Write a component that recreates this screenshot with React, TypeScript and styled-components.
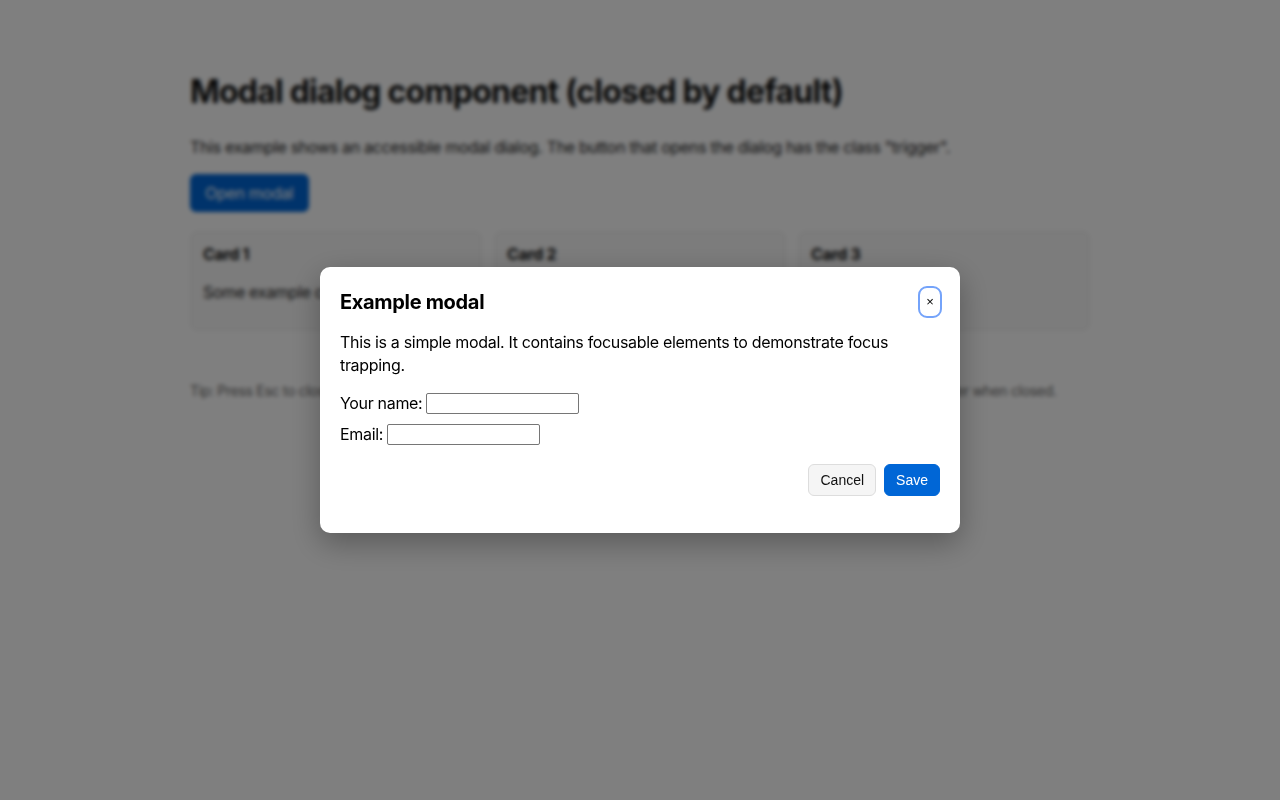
import React, { useState } from 'react';
import styled, { createGlobalStyle } from 'styled-components';

const GlobalStyle = createGlobalStyle`
  html, body {
    margin: 0;
    padding: 0;
    background: #ffffff;
    font-family: Inter, Roboto, "Liberation Sans", sans-serif;
    letter-spacing: -0.02em;
    color: #111111;
  }
  * {
    box-sizing: border-box;
  }
`;

const Page = styled.main`
  max-width: 900px;
  margin: 0 auto;
  padding: 73px 0 48px;
`;

const Title = styled.h1`
  margin: 0 0 24px;
  font-size: 32px;
  line-height: 38px;
  font-weight: 700;
  letter-spacing: -0.025em;
  color: #111111;
`;

const Lead = styled.p`
  margin: 0 0 15px;
  font-size: 16px;
  line-height: 24px;
  color: #222222;
`;

const PrimaryButton = styled.button`
  font-family: Inter, Roboto, sans-serif;
  font-size: 16px;
  line-height: 20px;
  letter-spacing: -0.02em;
  padding: 8px 15px 8px 14px;
  border: 1px solid #0066d6;
  border-radius: 6px;
  background: #0066d6;
  color: #ffffff;
  cursor: pointer;
`;

const CardGrid = styled.section`
  display: grid;
  grid-template-columns: repeat(3, 1fr);
  gap: 12px;
  margin-top: 19px;
`;

const Card = styled.article`
  background: #f8f8f8;
  border: 1px solid #ececec;
  border-radius: 8px;
  padding: 12px 12px 14px;
  min-height: 100px;
`;

const CardTitle = styled.h3`
  margin: 0;
  font-size: 16px;
  line-height: 20px;
  font-weight: 700;
`;

const CardText = styled.p`
  margin: 16px 0 0;
  font-size: 16px;
  line-height: 24px;
  color: #222222;
`;

const Tip = styled.p`
  margin: 50px 0 0;
  font-size: 14px;
  line-height: 20px;
  color: #666666;
  white-space: nowrap;
`;

const Overlay = styled.div`
  position: fixed;
  inset: 0;
  background: rgba(0, 0, 0, 0.5);
  backdrop-filter: blur(2px);
  -webkit-backdrop-filter: blur(2px);
  display: flex;
  align-items: center;
  justify-content: center;
`;

const Dialog = styled.div`
  width: 640px;
  background: #ffffff;
  border-radius: 10px;
  padding: 20px 20px 37px;
  box-shadow: 0 10px 30px rgba(0, 0, 0, 0.3);
  color: #000000;
`;

const DialogHeader = styled.header`
  display: flex;
  align-items: center;
  justify-content: space-between;
  height: 30px;
`;

const DialogTitle = styled.h2`
  margin: 0;
  font-size: 20px;
  line-height: 24px;
  font-weight: 700;
`;

const CloseButton = styled.button`
  font-family: "Liberation Sans", Arial, sans-serif;
  font-size: 13px;
  line-height: 16px;
  width: 20px;
  height: 28px;
  padding: 0;
  border: none;
  border-radius: 7px;
  background: #ffffff;
  color: #000000;
  outline: 2px solid #74a3fa;
  outline-offset: 0;
  cursor: pointer;
`;

const DialogText = styled.p`
  margin: 14px 0 15px;
  font-size: 16px;
  line-height: 23px;
`;

const FieldRow = styled.label`
  display: flex;
  align-items: center;
  gap: 4px;
  height: 23px;
  margin-bottom: 8px;
  font-size: 16px;
  line-height: 23px;
`;

const TextInput = styled.input`
  width: 153px;
  height: 21px;
  padding: 1px 2px;
  border: 1px solid #767676;
  border-radius: 2px;
  font-family: "Liberation Sans", Arial, sans-serif;
  font-size: 13px;
  background: #ffffff;
`;

const DialogFooter = styled.footer`
  display: flex;
  justify-content: flex-end;
  gap: 8px;
  margin-top: 18px;
`;

const FooterButton = styled.button<{ $primary?: boolean }>`
  font-family: "Liberation Sans", Arial, sans-serif;
  font-size: 14px;
  line-height: 16px;
  letter-spacing: 0;
  height: 32px;
  padding: 7px 11px;
  border-radius: 6px;
  border: 1px solid ${(p) => (p.$primary ? '#0066d6' : '#dddddd')};
  background: ${(p) => (p.$primary ? '#0066d6' : '#f5f5f5')};
  color: ${(p) => (p.$primary ? '#ffffff' : '#111111')};
  cursor: pointer;
`;

const cards = [
  { title: 'Card 1', text: 'Some example content.' },
  { title: 'Card 2', text: 'Some example content.' },
  { title: 'Card 3', text: 'Some example text.' },
];

export default function App() {
  const [open, setOpen] = useState(true);

  return (
    <>
      <GlobalStyle />
      <Page>
        <Title>Modal dialog component (closed by default)</Title>
        <Lead>
          This example shows an accessible modal dialog. The button that opens the dialog has the
          class "trigger".
        </Lead>
        <PrimaryButton className="trigger" onClick={() => setOpen(true)}>
          Open modal
        </PrimaryButton>
        <CardGrid>
          {cards.map((c) => (
            <Card key={c.title}>
              <CardTitle>{c.title}</CardTitle>
              <CardText>{c.text}</CardText>
            </Card>
          ))}
        </CardGrid>
        <Tip>
          Tip: Press Esc to close the modal, click the backdrop to dismiss it, and press Tab to move
          focus. Focus returns to the trigger when closed.
        </Tip>
      </Page>

      {open && (
        <Overlay onClick={() => setOpen(false)}>
          <Dialog role="dialog" aria-modal="true" onClick={(e) => e.stopPropagation()}>
            <DialogHeader>
              <DialogTitle>Example modal</DialogTitle>
              <CloseButton aria-label="Close" onClick={() => setOpen(false)}>
                ×
              </CloseButton>
            </DialogHeader>
            <DialogText>
              This is a simple modal. It contains focusable elements to demonstrate focus trapping.
            </DialogText>
            <FieldRow>
              Your name: <TextInput type="text" />
            </FieldRow>
            <FieldRow>
              Email: <TextInput type="email" />
            </FieldRow>
            <DialogFooter>
              <FooterButton onClick={() => setOpen(false)}>Cancel</FooterButton>
              <FooterButton $primary>Save</FooterButton>
            </DialogFooter>
          </Dialog>
        </Overlay>
      )}
    </>
  );
}
